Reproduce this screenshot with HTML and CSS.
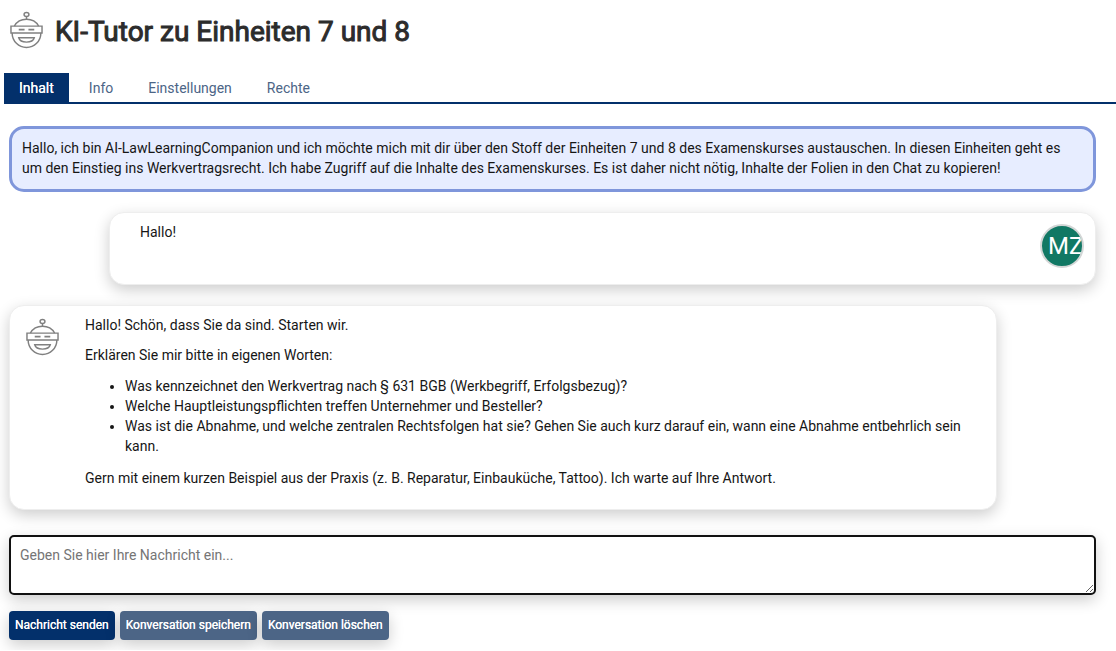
FILE: index.html
```
<!DOCTYPE html>
<html lang="de">
<head>
  <meta charset="UTF-8" />
  <meta name="viewport" content="width=device-width, initial-scale=1.0" />
  <title>KI-Tutor zu Einheiten 7 und 8</title>
  <link rel="stylesheet" href="styles.css">
</head>
<body>
  <svg class="sprite" aria-hidden="true">
    <symbol id="robot" viewBox="0 0 34 39">
      <g fill="none" stroke="#808080" stroke-width="1.5">
        <ellipse cx="17" cy="3.5" rx="2.5" ry="2" />
        <path d="M17 5.500v3" />
        <path d="M4.5 15.500C7 11 12 8.500 17 8.500S27 11 29.500 15.500" />
        <path d="M1 15.500h32v7H1z" />
        <path d="M2.200 22.500C2.200 31 9 37.500 17 37.500S31.800 31 31.800 22.500" />
        <path d="M9 19h6M19 19h6" stroke-width="1.800" />
        <path d="M9 27.500h16c-.8 3-4 4.500-8 4.500s-7.200-1.500-8-4.500z" />
      </g>
    </symbol>
  </svg>

  <header class="header">
    <svg class="robot"><use href="#robot" /></svg>
    <h1>KI-Tutor zu Einheiten 7 und 8</h1>
  </header>

  <nav class="tabs">
    <a class="tab active" href="#inhalt">Inhalt</a>
    <a class="tab" href="#info">Info</a>
    <a class="tab" href="#einstellungen">Einstellungen</a>
    <a class="tab" href="#rechte">Rechte</a>
  </nav>

  <main class="chat">
    <div class="intro">Hallo, ich bin AI-LawLearningCompanion und ich möchte mich mit dir über den Stoff der Einheiten 7 und 8 des Examenskurses austauschen. In diesen Einheiten geht es um den Einstieg ins Werkvertragsrecht. Ich habe Zugriff auf die Inhalte des Examenskurses. Es ist daher nicht nötig, Inhalte der Folien in den Chat zu kopieren!</div>

    <div class="message user">
      <div class="text"><p>Hallo!</p></div>
      <div class="avatar">MZ</div>
    </div>

    <div class="message bot">
      <svg class="robot"><use href="#robot" /></svg>
      <div class="text">
        <p>Hallo! Schön, dass Sie da sind. Starten wir.</p>
        <p>Erklären Sie mir bitte in eigenen Worten:</p>
        <ul>
          <li>Was kennzeichnet den Werkvertrag nach § 631 BGB (Werkbegriff, Erfolgsbezug)?</li>
          <li>Welche Hauptleistungspflichten treffen Unternehmer und Besteller?</li>
          <li>Was ist die Abnahme, und welche zentralen Rechtsfolgen hat sie? Gehen Sie auch kurz darauf ein, wann eine Abnahme entbehrlich sein kann.</li>
        </ul>
        <p>Gern mit einem kurzen Beispiel aus der Praxis (z. B. Reparatur, Einbauküche, Tattoo). Ich warte auf Ihre Antwort.</p>
      </div>
    </div>

    <form class="input-area">
      <textarea id="message" aria-label="Nachricht" placeholder="Geben Sie hier Ihre Nachricht ein..."></textarea>
      <div class="buttons">
        <button class="btn primary" type="button">Nachricht senden</button>
        <button class="btn" type="button">Konversation speichern</button>
        <button class="btn" type="button">Konversation löschen</button>
      </div>
    </form>
  </main>
</body>
</html>
```

FILE: styles.css
```
* {
  box-sizing: border-box;
}
body {
  margin: 0;
  font-family: Roboto, "Liberation Sans", sans-serif;
  font-size: 14px;
  line-height: 20px;
  color: #161616;
  background-color: #fff;
}
.sprite {
  display: none;
}
.robot {
  width: 33px;
  height: 38px;
  flex-shrink: 0;
}
.header {
  display: flex;
  align-items: flex-start;
  gap: 12px;
  padding: 11px 10px 0;
}
h1 {
  margin: 0;
  font-size: 28px;
  line-height: 42px;
  font-weight: 400;
  -webkit-text-stroke: 1px #2c2c2c;
  color: #2c2c2c;
}
.tabs {
  display: flex;
  gap: 5px;
  margin: 20px 0 0 4px;
  border-bottom: 2px solid #03306b;
}
.tab {
  padding: 5px 15px 4px;
  color: #4c6586;
  text-decoration: none;
}
.tab.active {
  color: #fff;
  text-shadow: 0 0 0 #fff;
  background-color: #03306b;
}
.chat {
  display: flex;
  flex-direction: column;
  gap: 20px;
  padding: 22px 20px 10px 9px;
}
.intro {
  padding: 9px 10px 11px;
  border: 3px solid #7f96db;
  border-radius: 15px;
  background-color: #e7edff;
}
.message {
  display: flex;
  padding: 9px 16px 21px;
  border: 1px solid #eee;
  border-radius: 15px;
  background-color: #fff;
  box-shadow: 0 5px 15px rgba(0, 0, 0, 0.2);
}
.message p {
  margin: 0 0 10px;
}
.message p:last-child {
  margin-bottom: 0;
}
.message ul {
  margin: 11px 0 12px;
  padding-left: 40px;
}
.message .text {
  flex: 1;
}
.user {
  margin-left: 100px;
  padding: 9px 11px 16px 30px;
}
.avatar {
  display: flex;
  align-items: center;
  width: 44px;
  height: 44px;
  margin-top: 2px;
  padding-left: 6px;
  border: 2px solid #d3d6d6;
  border-radius: 50%;
  background-color: #117864;
  color: #fff;
  font-size: 24px;
  overflow: hidden;
}
.bot {
  gap: 26px;
  margin-right: 99px;
}
.bot .robot {
  margin-top: 3px;
}
.input-area {
  display: flex;
  flex-direction: column;
  gap: 16px;
  margin-top: 5px;
}
textarea {
  display: block;
  width: 100%;
  height: 60px;
  padding: 8px 9px;
  border: 2px solid #111;
  border-radius: 5px;
  font: inherit;
  resize: vertical;
  outline: none;
  box-shadow: 0 5px 15px rgba(0, 0, 0, 0.2);
}
textarea::placeholder {
  color: #757575;
}
.buttons {
  display: flex;
  gap: 5px;
}
.btn {
  padding: 4px 6px 5px;
  border: 0;
  border-radius: 4px;
  background-color: #4c6586;
  color: #fff;
  font-family: inherit;
  font-size: 12px;
  line-height: 20px;
  text-shadow: 0 0 0 #fff;
  box-shadow: 0 5px 15px rgba(0, 0, 0, 0.2);
}
.btn.primary {
  background-color: #03306b;
}
```
